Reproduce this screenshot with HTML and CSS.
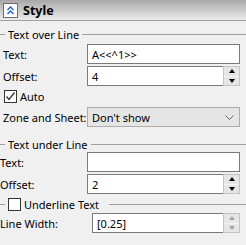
FILE: index.html
```html
<!DOCTYPE html>
<html lang="en">
<head>
    <meta charset="UTF-8">
    <title>Style</title>
    <link rel="stylesheet" href="styles.css">
</head>
<body>
    <div class="panel">
        <div class="header">
            <span class="collapseBtn">
                <svg width="9" height="9" viewBox="0 0 9 9"><path d="M1.5 4 L4.5 1 L7.5 4 M1.5 8 L4.5 5 L7.5 8" fill="none" stroke="#1f5fbf" stroke-width="1.4"/></svg>
            </span>
            <span class="headerTitle">Style</span>
        </div>

        <!--text over line-->
        <div class="group groupOver">
            <div class="legend"><span>Text over Line</span></div>
            <div class="row">
                <label>Text:</label>
                <div class="field">A&lt;&lt;^1&gt;&gt;</div>
            </div>
            <div class="row">
                <label>Offset:</label>
                <div class="field spinField">
                    <span class="value">4</span>
                    <span class="spin"><span class="up"></span><span class="down"></span></span>
                </div>
            </div>
            <div class="checkRow">
                <span class="checkbox checked">
                    <svg width="11" height="11" viewBox="0 0 11 11"><path d="M1.5 5.5 L4 8.5 L9.5 1.5" fill="none" stroke="#333" stroke-width="1.3"/></svg>
                </span>
                <span>Auto</span>
            </div>
            <div class="row zoneRow">
                <label>Zone and Sheet:</label>
                <div class="field combo">
                    <span class="value">Don't show</span>
                    <svg width="9" height="5" viewBox="0 0 9 5"><path d="M0.5 0.5 L4.5 4.5 L8.5 0.5" fill="none" stroke="#666" stroke-width="1"/></svg>
                </div>
            </div>
        </div>

        <!--text under line-->
        <div class="group groupUnder">
            <div class="legend"><span>Text under Line</span></div>
            <div class="row">
                <label>Text:</label>
                <div class="field"></div>
            </div>
            <div class="row">
                <label>Offset:</label>
                <div class="field spinField">
                    <span class="value">2</span>
                    <span class="spin"><span class="up"></span><span class="down"></span></span>
                </div>
            </div>
            <div class="legend checkLegend">
                <span class="checkbox"></span>
                <span>Underline Text</span>
            </div>
            <div class="row">
                <label class="wideLabel">Line Width:</label>
                <div class="field spinField narrow">
                    <span class="value">[0.25]</span>
                    <span class="spin disabled"><span class="up"></span><span class="down"></span></span>
                </div>
            </div>
        </div>
    </div>
</body>
</html>
```

FILE: styles.css
```css
*{
    box-sizing: border-box;
}

body{
    margin: 0;
    background-color: #f0f0f0;
    font-family: "Noto Sans", "Open Sans", sans-serif;
    font-size: 11px;
    color: #000;
    overflow: hidden;
    white-space: nowrap;
}

.panel{
    width: 246px;
    height: 245px;
}

.header{
    height: 21px;
    display: flex;
    align-items: center;
    gap: 5px;
    padding-left: 3px;
    border-bottom: solid #a0a0a0 1px;
    background: linear-gradient(#a8a8a8, #dedede 80%, #ececec);
}

.collapseBtn{
    width: 15px;
    height: 15px;
    display: flex;
    align-items: center;
    justify-content: center;
    border: solid #6d6d6d 1px;
    background-color: #fff;
}

.headerTitle{
    font-size: 12.5px;
    font-weight: bold;
}

.legend{
    display: flex;
    align-items: center;
    height: 14px;
}

.legend::before{
    content: "";
    width: 5px;
    height: 1px;
    background-color: #a0a0a0;
}

.legend::after{
    content: "";
    flex: 1;
    height: 1px;
    margin-left: 3px;
    background-color: #a0a0a0;
}

.legend > span{
    padding-left: 3px;
}

.groupOver .legend{
    margin-top: 6px;
    margin-bottom: 3px;
}

.groupUnder > .legend:first-child{
    margin-top: 10px;
    margin-bottom: 1px;
}

.row{
    display: flex;
    align-items: center;
    height: 20px;
    margin-bottom: 2px;
}

.row label{
    width: 87px;
    padding-left: 3px;
}

.groupUnder .row label{
    padding-left: 0;
}

.groupUnder .row .wideLabel{
    width: 92px;
}

.field{
    width: 153px;
    height: 20px;
    display: flex;
    align-items: center;
    padding-left: 4px;
    border: solid #7a7a7a 1px;
    background-color: #fff;
}

.field.narrow{
    width: 148px;
}

.spinField .value,
.combo .value{
    flex: 1;
}

.spin{
    width: 17px;
    height: 20px;
    margin-right: -1px;
    display: flex;
    flex-direction: column;
    border: solid #c4c4c4 1px;
    background-color: #e6e6e6;
}

.spin > span{
    flex: 1;
    display: flex;
    align-items: center;
    justify-content: center;
}

.spin .up{
    border-bottom: solid #f4f4f4 1px;
}

.spin .up::after{
    content: "";
    border-left: 3.5px solid transparent;
    border-right: 3.5px solid transparent;
    border-bottom: 4px solid #000;
}

.spin .down::after{
    content: "";
    border-left: 3.5px solid transparent;
    border-right: 3.5px solid transparent;
    border-top: 4px solid #000;
}

.spin.disabled .up::after{
    border-bottom-color: #a3a3a3;
}

.spin.disabled .down::after{
    border-top-color: #a3a3a3;
}

.checkRow{
    display: flex;
    align-items: center;
    gap: 3px;
    height: 16px;
    margin-top: 1px;
    padding-left: 4px;
}

.checkbox{
    width: 13px;
    height: 13px;
    display: flex;
    align-items: center;
    justify-content: center;
    border: solid #333 1px;
    background-color: #fff;
}

.zoneRow{
    margin-top: 3px;
}

.combo{
    padding-right: 5px;
    border-color: #adadad;
    background-color: #e5e5e5;
}

.checkLegend{
    margin-top: 3px;
    margin-bottom: 2px;
}

.checkLegend .checkbox{
    margin-left: 3px;
}

.checkLegend > span:last-child{
    padding-left: 3px;
}

.checkLegend::after{
    margin-left: 10px;
}
```
